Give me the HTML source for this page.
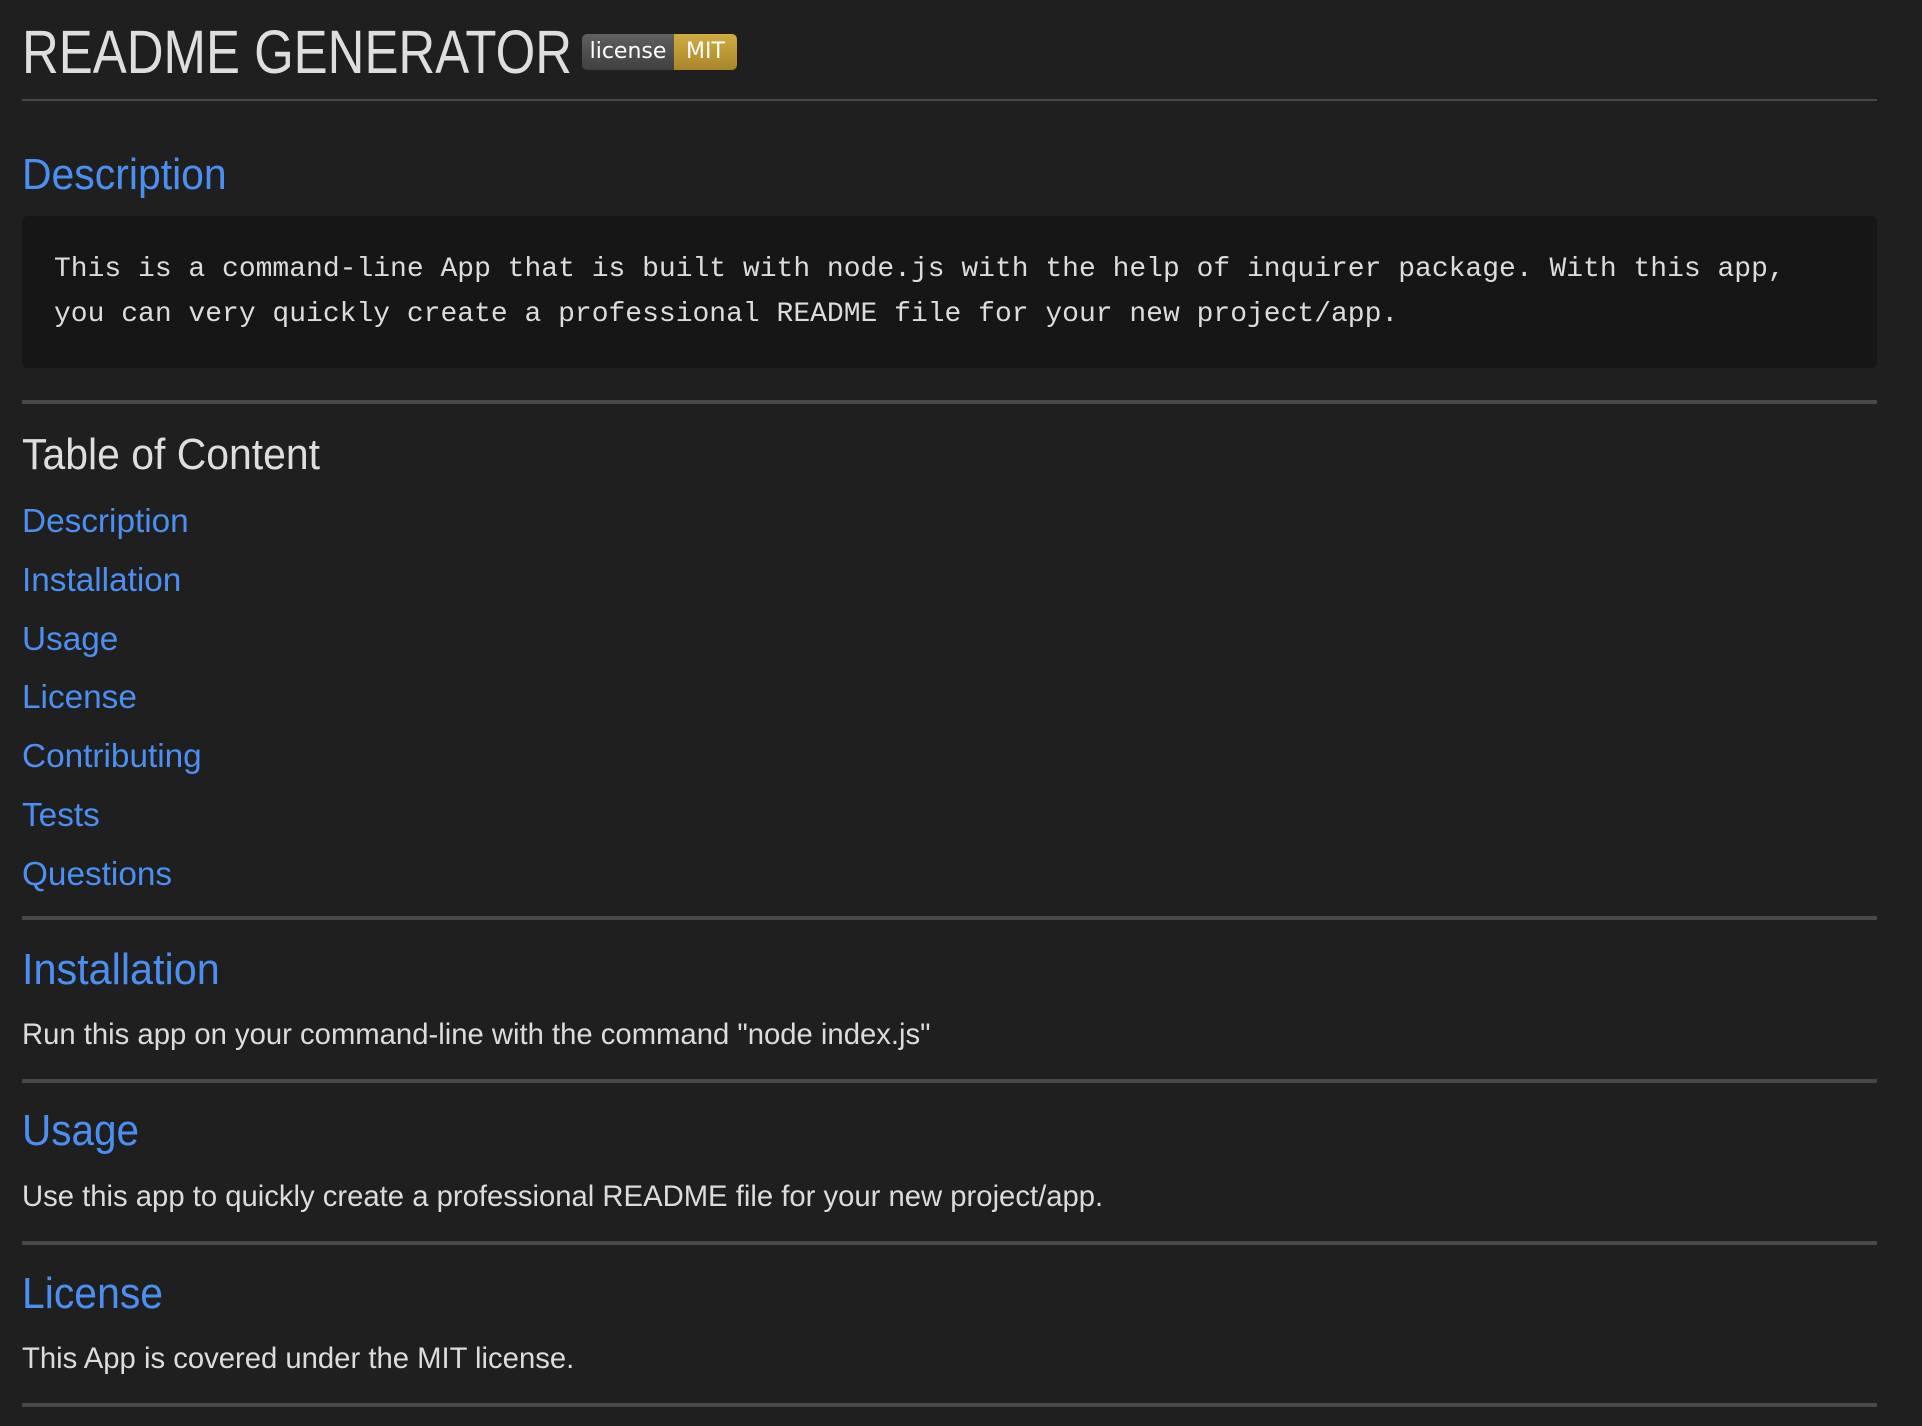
<!DOCTYPE html>
<html><head><meta charset="utf-8"><style>
html,body{margin:0;padding:0;background:#1f1f1f;width:1922px;height:1426px;overflow:hidden;font-family:"Liberation Sans",sans-serif;}
.a{position:absolute;line-height:1;white-space:nowrap;transform-origin:0 0;}
.h{color:#4c8ff3;font-size:44px;left:22px;transform:scaleX(0.93);}
.l{color:#4c8ff3;font-size:33px;left:22px;transform:scaleX(1.01);}
.b{color:#dcdcdc;font-size:30px;left:22px;transform:scaleX(0.975);}
.hr{position:absolute;left:22px;width:1855px;background:#484848;}
.m{font-family:"Liberation Mono",monospace;font-size:28px;color:#dcdcdc;left:54px;}
</style></head><body>
<div class="a" style="left:22px;top:22px;font-size:61px;color:#dedede;transform:scaleX(0.835);">README GENERATOR</div>
<div style="position:absolute;left:582px;top:34px;height:36px;width:155px;border-radius:5px;overflow:hidden;display:flex;font-family:'DejaVu Sans',sans-serif;font-size:22px;color:#fff;">
<div style="width:92px;background:linear-gradient(#606060,#404040);text-align:center;line-height:36px;">license</div>
<div style="flex:1;background:linear-gradient(#d0ac42,#a8862a);text-align:center;line-height:36px;">MIT</div>
</div>
<div class="hr" style="top:99px;height:2px;"></div>
<div class="a h" style="top:153px;">Description</div>
<div style="position:absolute;left:22px;top:216px;width:1855px;height:152px;background:#161616;border-radius:6px;"></div>
<div class="a m" style="top:256px;">This is a command-line App that is built with node.js with the help of inquirer package. With this app,</div>
<div class="a m" style="top:301px;">you can very quickly create a professional README file for your new project/app.</div>
<div class="hr" style="top:400px;height:4px;"></div>
<div class="a h" style="top:433px;color:#dedede;transform:scaleX(0.93);">Table of Content</div>
<div class="a l" style="top:504px;">Description</div>
<div class="a l" style="top:563px;">Installation</div>
<div class="a l" style="top:622px;">Usage</div>
<div class="a l" style="top:680px;">License</div>
<div class="a l" style="top:739px;">Contributing</div>
<div class="a l" style="top:798px;">Tests</div>
<div class="a l" style="top:857px;">Questions</div>
<div class="hr" style="top:916px;height:4px;"></div>
<div class="a h" style="top:948px;transform:scaleX(0.94);">Installation</div>
<div class="a b" style="top:1020px;">Run this app on your command-line with the command "node index.js"</div>
<div class="hr" style="top:1079px;height:4px;"></div>
<div class="a h" style="top:1109px;transform:scaleX(0.92);">Usage</div>
<div class="a b" style="top:1182px;">Use this app to quickly create a professional README file for your new project/app.</div>
<div class="hr" style="top:1241px;height:4px;"></div>
<div class="a h" style="top:1272px;transform:scaleX(0.93);">License</div>
<div class="a b" style="top:1344px;">This App is covered under the MIT license.</div>
<div class="hr" style="top:1403px;height:4px;"></div>
</body></html>
